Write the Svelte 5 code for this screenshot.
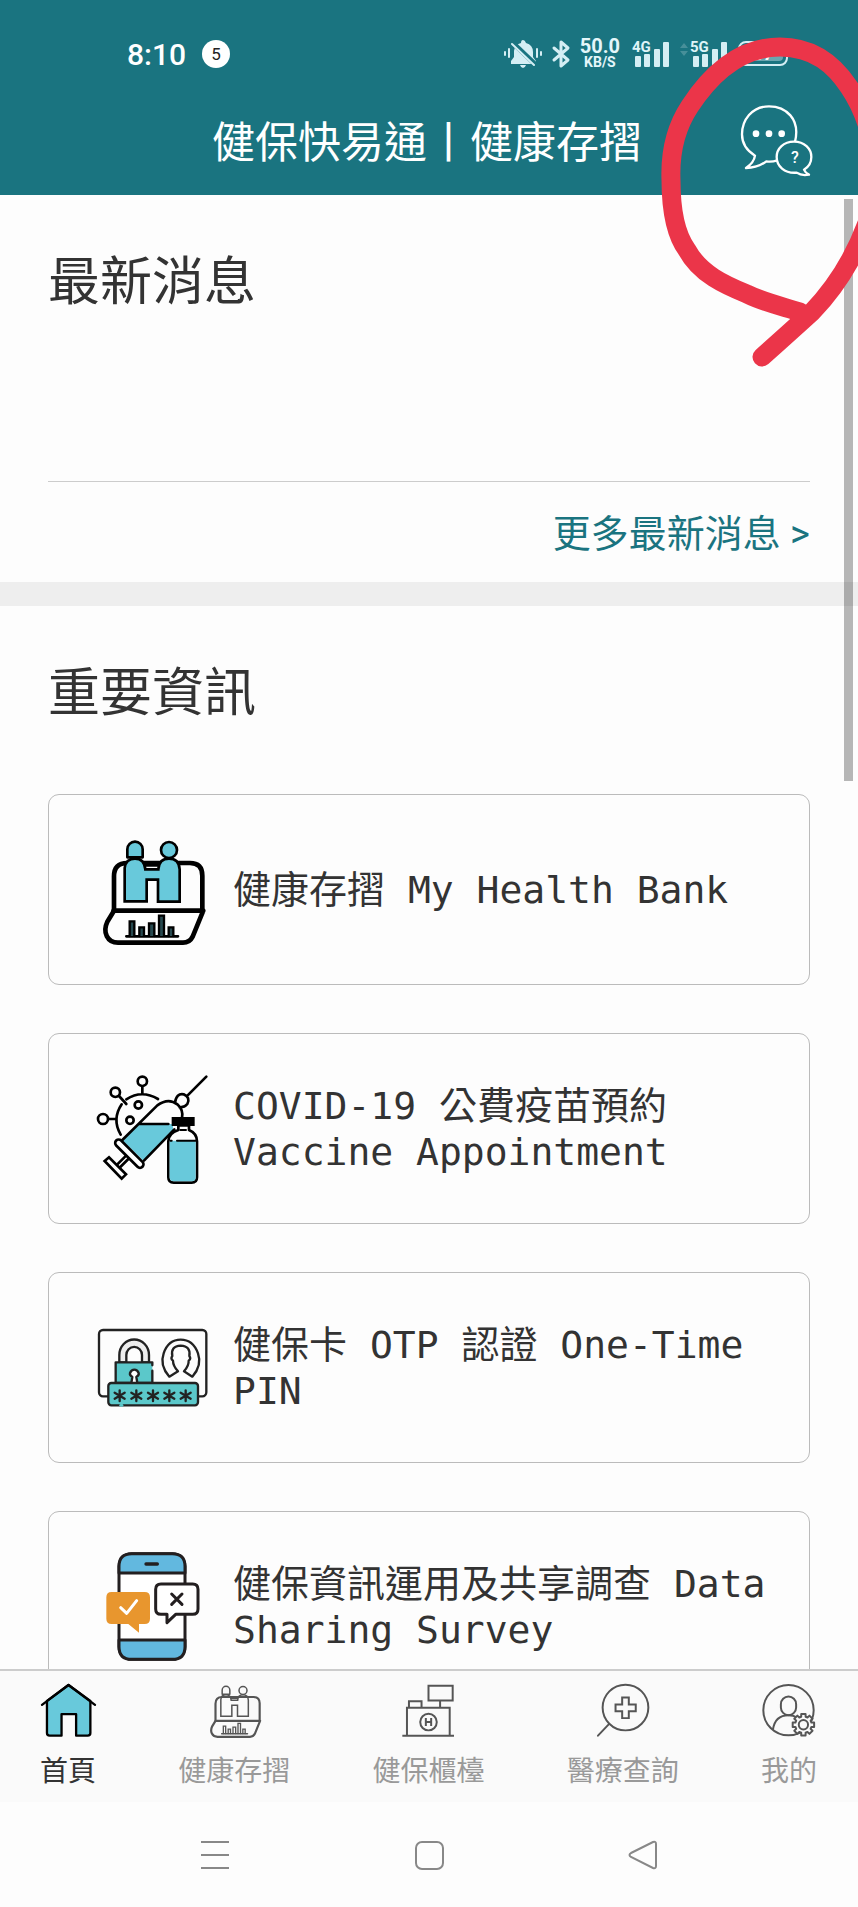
<script>
  const cards = [
    { icon: 'bank', label: '健康存摺 My Health Bank' },
    { icon: 'vaccine', label: 'COVID-19 公費疫苗預約 Vaccine Appointment' },
    { icon: 'otp', label: '健保卡 OTP 認證 One-Time PIN' },
    { icon: 'survey', label: '健保資訊運用及共享調查 Data Sharing Survey' }
  ];

  const tabs = [
    { icon: 'home', label: '首頁', active: true },
    { icon: 'bank', label: '健康存摺' },
    { icon: 'counter', label: '健保櫃檯' },
    { icon: 'search', label: '醫療查詢' },
    { icon: 'me', label: '我的' }
  ];

  // Outline of an eight-toothed gear
  function gear(cx, cy, outer, inner) {
    const points = [];
    for (let i = 0; i < 8; i++) {
      const mid = (i * Math.PI) / 4;
      for (const [offset, r] of [[-0.27, inner], [-0.2, outer], [0.2, outer], [0.27, inner]]) {
        points.push(`${cx + r * Math.cos(mid + offset)},${cy + r * Math.sin(mid + offset)}`);
      }
    }
    return points.join(' ');
  }
</script>

{#snippet bank(line, fill, bar, thick, thin)}
  <g stroke={line} stroke-linejoin="round" stroke-linecap="round" fill="none">
    <path stroke-width={thick} d="M105 270V167Q105 127 145 127H333Q370 127 370 165V270M103 270H373M105 270L85 303C70 335 85 366 117 366H312Q332 366 341 348L372 272" />
    <path stroke-width={thin} fill={fill} d="M145 110V86a23 23 0 0 1 46 0V110Z" />
    <circle stroke-width={thin} fill={fill} cx="270" cy="88" r="24" />
    <path stroke-width={thin} stroke-linejoin="miter" fill={fill} d="M137 242V142Q140 114 168 114T199 146H238Q240 114 270 114T302 146V243H237V177H203V242Z" />
    <path stroke-width={thin} d="M199 134H238M142 347H297" />
    <g stroke-width={thin - 1} fill={bar} stroke-linejoin="miter">
      <path d="M152 346V302H166V346M181 346V320H195V346M210 346V308H226V346M240 346V285H255V346M269 346V320H283V346" />
    </g>
  </g>
{/snippet}

{#snippet bars(name)}
  <text x="10" y="13" font-size="15" font-weight="700" fill="#dff4f8">{name}</text>
  <g fill="#d5eef4">
    <rect x="13" y="17" width="6" height="11" rx="1" />
    <rect x="22" y="15" width="6" height="13" rx="1" />
    <rect x="32" y="10" width="6" height="18" rx="1" />
    <rect x="41" y="3" width="6" height="25" rx="1" />
  </g>
{/snippet}

<div class="app">
  <header>
    <div class="status">
      <span class="time">8:10</span>
      <span class="count">5</span>
      <div class="indicators">
        <svg class="bell" viewBox="0 0 38 28" aria-hidden="true">
          <path fill="#d5eef4" d="M7 24V21L10 17V11Q11 4 17 3Q17 0 19 0T22 3Q29 5 29 12V17L32 21V24ZM16 25h6q-1 3-3 3t-3-3" />
          <path d="M9 3L32 25" stroke="#1a7480" stroke-width="5" />
          <path d="M8 4L30 25M1 12v3M5 9v8M33 9v8M37 12v3" stroke="#d5eef4" stroke-width="2" stroke-linecap="round" />
        </svg>
        <svg class="bluetooth" viewBox="0 0 18 28" aria-hidden="true">
          <path d="M2 8L16 20L9 26V2L16 8L2 20" fill="none" stroke="#d5eef4" stroke-width="3" stroke-linejoin="round" stroke-linecap="round" />
        </svg>
        <span class="speed"><b>50.0</b><small>KB/S</small></span>
        <svg class="first-sim" viewBox="8 0 40 30" aria-hidden="true">{@render bars('4G')}</svg>
        <svg class="second-sim" viewBox="0 0 48 30" aria-hidden="true">
          <path d="M0 9l4-5 4 5zM0 12l4 5 4-5z" fill="#fff" opacity=".2" />
          {@render bars('5G')}
        </svg>
        <svg class="battery" viewBox="0 0 56 26" aria-hidden="true">
          <rect x="1" y="1" width="48" height="23" rx="7" fill="none" stroke="#d5eef4" stroke-width="2" />
          <rect x="5" y="5" width="40" height="15" rx="4" fill="#6ba6b0" />
          <text x="15" y="19" font-size="18" font-weight="700" fill="#fff">67</text>
          <path d="M51 10q4 2 0 5z" fill="#d5eef4" />
        </svg>
      </div>
    </div>
    <div class="titlebar">
      <h1>健保快易通丨健康存摺</h1>
      <button class="chat" aria-label="客服">
        <svg viewBox="780 305 225 228" fill="none" stroke="#fff" stroke-width="7" stroke-linejoin="round">
          <path d="M948 424C965 355 920 318 870 318C818 318 789 360 789 402C789 432 805 452 828 466Q825 487 801 503Q838 502 862 483Q877 486 895 480" />
          <path d="M975 508Q979 518 990 523Q967 527 953 517C916 520 893 497 893 470C893 444 914 424 945 424C976 424 997 445 997 470Q997 495 975 508Z" />
          <g fill="#fff" stroke="none">
            <circle cx="831" cy="400" r="10" /><circle cx="870" cy="400" r="10" /><circle cx="908" cy="400" r="10" />
            <text x="948" y="488" text-anchor="middle" font-size="48" font-weight="500">?</text>
          </g>
        </svg>
      </button>
    </div>
  </header>

  <main>
    <section>
      <h2>最新消息</h2>
      <div class="news"></div>
      <a class="more" href="#news">更多最新消息 &gt;</a>
    </section>
    <section class="info">
      <h2>重要資訊</h2>
      <div class="cards">
        {#each cards as card}
          <button class="card">
            {#if card.icon === 'bank'}
              <svg viewBox="54 43 330 330" aria-hidden="true">{@render bank('#000', '#68c9db', '#27494f', 14, 8)}</svg>
            {:else if card.icon === 'vaccine'}
              <svg viewBox="54 40 330 330" aria-hidden="true" fill="none" stroke="#000" stroke-width="8" stroke-linecap="round" stroke-linejoin="round">
                <circle cx="190" cy="62" r="14" /><circle cx="109" cy="95" r="14" /><circle cx="72" cy="175" r="15" />
                <circle cx="178" cy="133" r="11" /><circle cx="153" cy="179" r="11" />
                <path d="M190 77V100M120 106L142 130M88 175H110M125 222Q98 176 128 131M142 116Q188 86 237 115" />
                <path fill="#68c9db" stroke="none" d="M130 238L180 190H282V210L195 302Z" />
                <path d="M130 238L235 134Q268 110 295 131Q314 148 309 172M180 190H268M195 300L286 206M288 126Q292 97 314 101Q335 110 325 130Q316 141 302 140M326 104L382 48" />
                <path d="M142 284L112 314M151 292L121 322" />
                <path stroke-width="29" d="M119 247L183 311" />
                <path stroke="#fff" stroke-width="13" d="M119 247L183 311" />
                <path fill="#fff" stroke-linejoin="miter" d="M77 301L90 290L141 341L128 354Z" />
                <path fill="#fff" d="M298 194V208Q268 218 268 242V350Q268 366 284 366H338Q354 366 354 350V242Q354 218 330 208V194Z" />
                <path fill="#68c9db" stroke="none" d="M272 240H350V350Q350 362 338 362H284Q272 362 272 350Z" />
                <path d="M294 240H350M274 240H278M304 208H321" stroke-width="6" />
                <rect x="282" y="173" width="61" height="19" fill="#000" stroke-linejoin="miter" />
              </svg>
            {:else if card.icon === 'otp'}
              <svg viewBox="54 37 330 330" aria-hidden="true" fill="none" stroke="#222" stroke-width="7" stroke-linecap="round" stroke-linejoin="round">
                <rect x="60" y="88" width="322" height="199" rx="12" />
                <path fill="#eee" d="M121 185V163a44 46 0 0 1 89 0V185H189V163a23 24 0 0 0-47 0V185Z" />
                <path fill="#5bc8ca" d="M220 210V247H110V185H220V194" />
                <path fill="#fff" d="M157 247L160 229Q151 223 153 217Q157 207 166 207T179 217Q181 223 172 229L175 247" />
                <path d="M271 228Q241 194 254 158Q268 117 305 117T357 158Q370 194 340 228L315 212Q330 195 329 180Q337 174 331 166Q336 137 305 135Q274 137 280 166Q274 174 282 180Q282 195 297 212Z" />
                <rect x="88" y="247" width="269" height="67" rx="9" fill="#5bc8ca" />
                <path stroke="#5bc8ca" stroke-width="8" d="M125 314H129" />
                {#each [122, 172, 222, 271, 320] as x}
                  <path d="M{x} 269V301M{x - 15} 276L{x + 15} 294M{x + 15} 276L{x - 15} 294" />
                {/each}
              </svg>
            {:else}
              <svg viewBox="54 64 330 330" aria-hidden="true" fill="none" stroke="#231f20" stroke-width="9" stroke-linecap="round" stroke-linejoin="round">
                <rect x="120" y="69" width="198" height="317" rx="38" fill="#fff" />
                <path fill="#62b8df" d="M120 127V107Q120 69 158 69H280Q318 69 318 107V127ZM120 328V348Q120 386 158 386H280Q318 386 318 348V328Z" />
                <path stroke-width="10" d="M201 100H235" />
                <path fill="#e8962e" stroke="none" d="M98 184H197Q213 184 213 200V264Q213 280 197 280H180V306L148 280H98Q82 280 82 264V200Q82 184 98 184Z" />
                <path stroke="#fff" d="M125 231L143 248L173 210" />
                <path fill="#fff" d="M246 160H341Q357 160 357 176V235Q357 251 341 251H290L264 276V251H246Q230 251 230 235V176Q230 160 246 160Z" />
                <path d="M278 190L309 221M309 190L278 221" />
              </svg>
            {/if}
            <span>{card.label}</span>
          </button>
        {/each}
      </div>
    </section>
    <div class="thumb"></div>
  </main>

  <nav class="tabs">
    {#each tabs as tab}
      <a href="#{tab.icon}" class:active={tab.active}>
        {#if tab.icon === 'home'}
          <svg viewBox="122 70 166 166" aria-hidden="true" fill="none" stroke="#000" stroke-width="7" stroke-linejoin="round" stroke-linecap="round">
            <path fill="#68c9db" d="M140 124L205 76L271 124V221Q271 229 263 229H228V164H184V229H148Q140 229 140 221Z" />
            <path d="M125 136L205 76L285 136" />
          </svg>
        {:else if tab.icon === 'bank'}
          <svg viewBox="54 43 330 330" aria-hidden="true">{@render bank('#555', 'none', 'none', 13, 9)}</svg>
        {:else if tab.icon === 'counter'}
          <svg viewBox="1204 70 166 166" aria-hidden="true" fill="none" stroke="#555" stroke-width="6">
            <path d="M1208 229H1364M1222 229V145H1351V229M1228 145V125H1266V145M1287 78H1360V123H1287ZM1322 123V145" />
            <circle cx="1287" cy="188" r="25" />
            <path d="M1279 176V200M1295 176V200M1279 188H1295" />
          </svg>
        {:else if tab.icon === 'search'}
          <svg viewBox="500 70 166 166" aria-hidden="true" fill="none" stroke="#555" stroke-width="6" stroke-linecap="round">
            <circle cx="592" cy="144" r="69" />
            <path d="M542 194L509 229" />
            <path d="M582 114H602V135H623V155H602V176H582V155H562V135H582Z" />
          </svg>
        {:else}
          <svg viewBox="1000 70 166 166" aria-hidden="true" fill="none" stroke="#555" stroke-width="6">
            <circle cx="1083" cy="152" r="76" />
            <rect x="1060" y="111" width="46" height="56" rx="23" />
            <path d="M1036 211Q1042 167 1083 167Q1098 167 1108 174" />
            <polygon points={gear(1128, 196, 33, 25)} fill="#fafafa" stroke-linejoin="round" />
            <circle cx="1128" cy="196" r="14" />
          </svg>
        {/if}
        <span>{tab.label}</span>
      </a>
    {/each}
  </nav>

  <div class="system">
    <button aria-label="最近使用">
      <svg viewBox="0 0 30 30"><path d="M1 2H29M1 15H29M1 28H29" /></svg>
    </button>
    <button aria-label="主畫面">
      <svg viewBox="0 0 30 30"><rect x="2" y="2" width="27" height="27" rx="6" /></svg>
    </button>
    <button aria-label="返回">
      <svg viewBox="0 0 30 30"><path d="M3 13L25 2Q28 1 28 4V26Q28 29 25 28L3 17Q0 15 3 13Z" /></svg>
    </button>
  </div>

  <svg class="scribble" viewBox="658 30 200 350" aria-hidden="true">
    <path d="M800 312C785 307 765 303 747 294C725 285 700 274 687 250C676 235 671 210 671 180C670 155 674 130 690 106C715 68 745 47 780 47C815 47 835 66 849 87C870 118 884 170 870 215C858 250 840 283 812 312Q790 332 762 357" fill="none" stroke="#eb3549" stroke-width="19" stroke-linecap="round" stroke-linejoin="round" />
  </svg>
</div>

<style>
  :global(body) {
    margin: 0;
  }

  .app {
    position: relative;
    display: flex;
    flex-direction: column;
    height: 100vh;
    overflow: hidden;
    background: #fdfdfd;
    color: #333;
    font-family: Roboto, "Noto Sans CJK TC", sans-serif;
  }

  button {
    padding: 0;
    border: 0;
    background: none;
    color: inherit;
    font: inherit;
  }

  a {
    color: inherit;
    text-decoration: none;
  }

  svg {
    display: block;
    flex: none;
    overflow: visible;
  }

  h1,
  h2 {
    margin: 0;
    font-weight: 400;
  }

  header {
    flex: none;
    background: #1a7480;
    color: #fff;
  }

  .status {
    display: flex;
    align-items: center;
    height: 72px;
    padding: 18px 64px 0 127px;
  }

  .time {
    font-size: 30px;
    font-weight: 500;
  }

  .count {
    display: grid;
    place-items: center;
    width: 28px;
    height: 28px;
    margin-left: 16px;
    border-radius: 50%;
    background: #fff;
    color: #222;
    font-size: 17px;
  }

  .indicators {
    display: flex;
    align-items: center;
    gap: 10px;
    margin-left: auto;
  }

  .bell {
    width: 38px;
    height: 28px;
  }

  .bluetooth {
    width: 18px;
    height: 28px;
  }

  .speed {
    display: flex;
    flex-direction: column;
    align-items: center;
    color: #e4f6fa;
    line-height: 16px;
  }

  .speed b {
    font-size: 20px;
    font-weight: 700;
  }

  .speed small {
    font-size: 14px;
    font-weight: 700;
  }

  .first-sim {
    width: 40px;
    height: 30px;
  }

  .second-sim {
    width: 48px;
    height: 30px;
  }

  .battery {
    width: 56px;
    height: 26px;
  }

  .titlebar {
    display: grid;
    grid-template-columns: 1fr auto 1fr;
    align-items: center;
    height: 105px;
    padding: 0 44px 0 40px;
  }

  h1 {
    grid-column: 2;
    font-size: 43px;
    line-height: 64px;
  }

  .chat {
    justify-self: end;
    padding-bottom: 6px;
  }

  .chat svg {
    width: 75px;
    height: 76px;
  }

  main {
    position: relative;
    flex: 1;
    min-height: 0;
    overflow: hidden;
  }

  section {
    padding: 50px 48px 0;
  }

  .info {
    border-top: 24px solid #eee;
  }

  h2 {
    font-size: 52px;
    line-height: 76px;
  }

  .news {
    height: 160px;
    border-bottom: 1px solid #ccc;
  }

  .more {
    display: block;
    padding-top: 4px;
    color: #1a7480;
    font-size: 38px;
    line-height: 96px;
    text-align: right;
  }

  .cards {
    display: flex;
    flex-direction: column;
    gap: 48px;
    margin-top: 62px;
  }

  .card {
    display: flex;
    align-items: center;
    gap: 26px;
    height: 191px;
    padding: 0 24px 0 48px;
    border: 1px solid #bbb;
    border-radius: 11px;
    font-family: "DejaVu Sans Mono", "Noto Sans CJK TC", monospace;
    font-size: 38px;
    line-height: 46px;
    text-align: left;
  }

  .card svg {
    width: 110px;
    height: 110px;
  }

  .thumb {
    position: absolute;
    top: 4px;
    right: 5px;
    width: 9px;
    height: 582px;
    background: rgba(0, 0, 0, 0.28);
  }

  .tabs {
    display: flex;
    flex: none;
    justify-content: space-between;
    padding: 12px 41px 10px 40px;
    border-top: 2px solid #ccc;
    background: #fafafa;
    color: #999;
  }

  .tabs a {
    display: flex;
    flex-direction: column;
    align-items: center;
    gap: 14px;
    font-size: 28px;
    line-height: 40px;
  }

  .tabs .active {
    color: #333;
  }

  .tabs svg {
    width: 55px;
    height: 55px;
  }

  .system {
    display: grid;
    flex: none;
    grid-template-columns: repeat(3, 1fr);
    place-items: center;
    height: 105px;
    padding: 0 108px;
  }

  .system svg {
    width: 30px;
    height: 30px;
    fill: none;
    stroke: #888;
    stroke-width: 2;
  }

  .scribble {
    position: absolute;
    top: 30px;
    right: 0;
    width: 200px;
    height: 350px;
    pointer-events: none;
  }
</style>
